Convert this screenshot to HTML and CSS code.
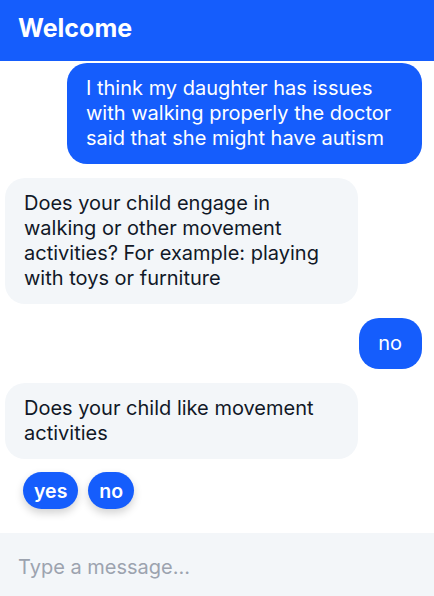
FILE: index.html
```html
<!DOCTYPE html>
<html>
<head>
<meta charset="utf-8">
<link rel="stylesheet" href="styles.css">
</head>
<body>
<div class="app">
  <header class="header">Welcome</header>
  <main class="messages">
    <div class="msg user">I think my daughter has issues with walking properly the doctor said that she might have autism</div>
    <div class="msg bot">Does your child engage in walking or other movement activities? For example: playing with toys or furniture</div>
    <div class="msg user">no</div>
    <div class="msg bot">Does your child like movement activities</div>
    <div class="choices">
      <button class="choice">yes</button>
      <button class="choice">no</button>
    </div>
  </main>
  <footer class="composer">
    <input class="input" type="text" placeholder="Type a message...">
  </footer>
</div>
</body>
</html>
```
FILE: styles.css
```css
* { box-sizing: border-box; }
html, body { margin: 0; padding: 0; }
body {
  font-family: Inter, "Noto Sans", sans-serif;
  background: #fff;
  color: #111827;
}
.app {
  width: 434px;
  height: 596px;
  display: flex;
  flex-direction: column;
  overflow: hidden;
}
.header {
  height: 61px;
  flex: 0 0 61px;
  background: #155dfc;
  color: #fff;
  font-weight: 700;
  font-size: 25px;
  line-height: 56px;
  padding: 0 18px;
}
.messages {
  flex: 1;
  display: flex;
  flex-direction: column;
  gap: 14px;
  padding: 2px 12px 0 5px;
}
.msg {
  max-width: 355px;
  font-size: 20px;
  line-height: 25px;
  padding: 13px 20px 13px 19px;
  border-radius: 20px;
}
.msg.user {
  align-self: flex-end;
  background: #155dfc;
  color: #fff;
}
.msg.bot {
  align-self: flex-start;
  width: 353px;
  background: #f3f6f9;
  color: #111827;
}
.choices {
  display: flex;
  gap: 10px;
  padding-left: 18px;
  margin-top: -1px;
}
.choice {
  font-family: Inter, "Noto Sans", sans-serif;
  font-size: 19.5px;
  font-weight: 600;
  color: #fff;
  background: #155dfc;
  border: none;
  border-radius: 19px;
  height: 37px;
  padding: 0 11px;
  box-shadow: 0 4px 8px rgba(0, 0, 0, 0.18);
}
.composer {
  flex: 0 0 63px;
  background: #f3f6f9;
  display: flex;
  align-items: center;
}
.input {
  width: 100%;
  height: 100%;
  border: none;
  background: transparent;
  font-family: Inter, "Noto Sans", sans-serif;
  font-size: 20px;
  padding: 4px 18px 0;
  color: #111827;
  outline: none;
}
.input::placeholder { color: #9ca3af; }
```
